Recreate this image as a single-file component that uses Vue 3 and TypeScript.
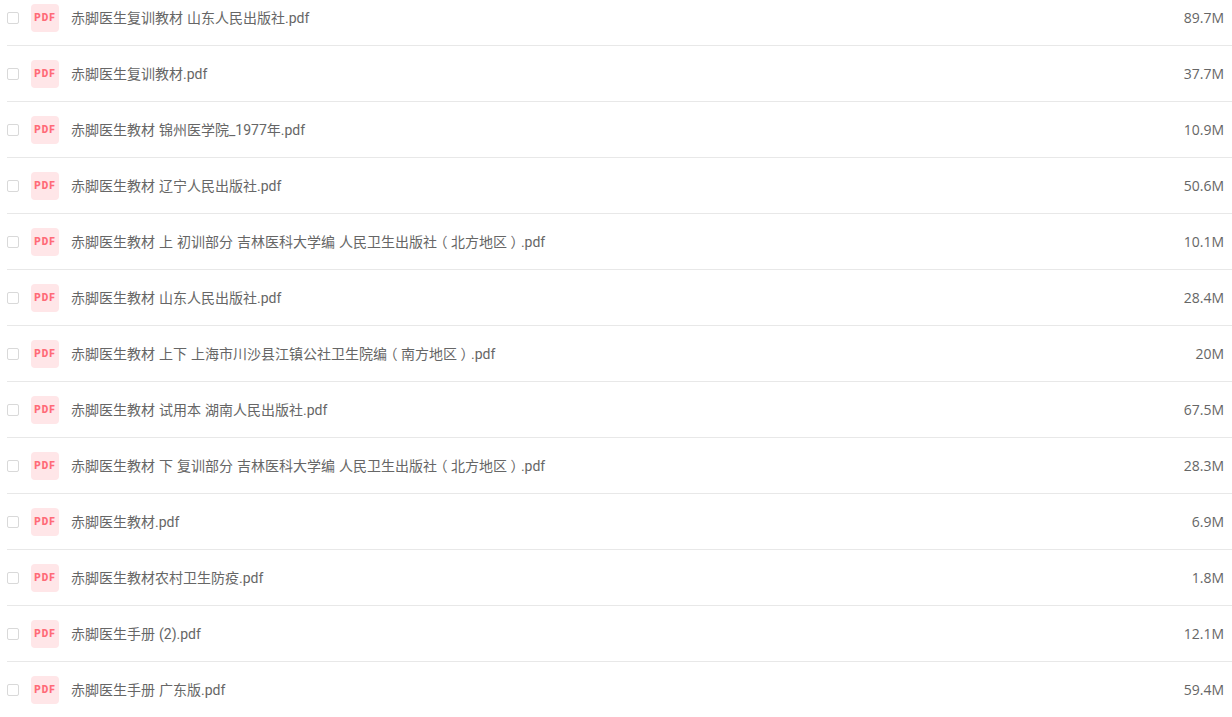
<script setup lang="ts">
const files = [
  { name: '赤脚医生复训教材 山东人民出版社.pdf', size: '89.7M' },
  { name: '赤脚医生复训教材.pdf', size: '37.7M' },
  { name: '赤脚医生教材 锦州医学院_1977年.pdf', size: '10.9M' },
  { name: '赤脚医生教材 辽宁人民出版社.pdf', size: '50.6M' },
  { name: '赤脚医生教材 上 初训部分 吉林医科大学编 人民卫生出版社（北方地区）.pdf', size: '10.1M' },
  { name: '赤脚医生教材 山东人民出版社.pdf', size: '28.4M' },
  { name: '赤脚医生教材 上下 上海市川沙县江镇公社卫生院编（南方地区）.pdf', size: '20M' },
  { name: '赤脚医生教材 试用本 湖南人民出版社.pdf', size: '67.5M' },
  { name: '赤脚医生教材 下 复训部分 吉林医科大学编 人民卫生出版社（北方地区）.pdf', size: '28.3M' },
  { name: '赤脚医生教材.pdf', size: '6.9M' },
  { name: '赤脚医生教材农村卫生防疫.pdf', size: '1.8M' },
  { name: '赤脚医生手册 (2).pdf', size: '12.1M' },
  { name: '赤脚医生手册 广东版.pdf', size: '59.4M' },
]

// full-width brackets sit centred in their cell in the original font
const nameParts = (name: string) => name.split(/([（）])/)
</script>

<template>
  <div class="page">
    <ul class="file-list">
      <li v-for="file in files" :key="file.name" class="file-row">
        <span class="check"></span>
        <span class="pdf-icon">PDF</span>
        <span class="file-name" lang="zh-CN">
          <template v-for="(part, i) in nameParts(file.name)" :key="i">
            <span v-if="i % 2" class="bracket">{{ part }}</span>
            <template v-else>{{ part }}</template>
          </template>
        </span>
        <span class="file-size">{{ file.size }}</span>
      </li>
    </ul>
  </div>
</template>

<style scoped>
.page {
  height: 717px;
  overflow: hidden;
  background: #fff;
  font-family: "Open Sans", "Noto Sans CJK SC", sans-serif;
}

.file-list {
  list-style: none;
  margin: -10px 0 0 7px;
  padding: 0;
}

.file-row {
  display: flex;
  align-items: center;
  height: 56px;
  box-sizing: border-box;
  border-bottom: 1px solid #e8e8e8;
  padding-right: 8px;
}

.check {
  width: 12px;
  height: 12px;
  box-sizing: border-box;
  border: 1px solid #d9d9d9;
  border-radius: 2px;
  margin-right: 12px;
}

.pdf-icon {
  width: 28px;
  height: 28px;
  border-radius: 4px;
  background: #ffe6e8;
  color: #ff6b78;
  font-family: "Roboto", sans-serif;
  font-size: 10px;
  font-weight: 900;
  letter-spacing: 1px;
  line-height: 28px;
  text-align: center;
  margin-right: 12px;
}

.file-name {
  flex: 1;
  margin-bottom: 2px;
  font-family: "Roboto", "Noto Sans CJK SC", sans-serif;
  font-size: 14px;
  word-spacing: 0.5px;
  color: #666;
}

.bracket {
  display: inline-block;
  width: 14px;
  text-align: center;
  font-feature-settings: "halt";
}

.file-size {
  font-size: 14px;
  color: #666;
  text-align: right;
}
</style>
